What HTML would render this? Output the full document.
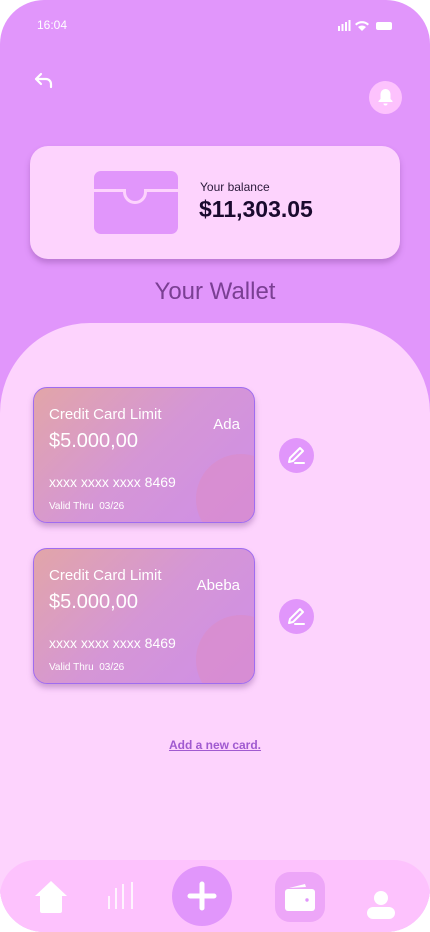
<!DOCTYPE html><html><head><style>
*{margin:0;padding:0;box-sizing:border-box}
body{width:430px;height:932px;background:#fff;font-family:"Liberation Sans",sans-serif;overflow:hidden;position:relative}
.ph{position:absolute;inset:0;background:#e196fb;border-radius:44px;overflow:hidden}
.st{position:absolute;top:18px;left:37px;color:#fff;font-size:12px}
.bal{position:absolute;left:30px;top:146px;width:370px;height:113px;background:#fdd3fd;border-radius:18px;box-shadow:0 4px 6px rgba(120,60,140,.35)}
.wal{position:absolute;left:64px;top:25px;width:84px;height:63px;background:#e196fb;border-radius:7px}
.ttl{position:absolute;top:278px;width:100%;text-align:center;font-size:24px;color:#7a3f93}
.low{position:absolute;left:0;top:323px;width:430px;height:620px;background:#fdd3fd;border-radius:90px 90px 0 0}
.card{position:absolute;left:33px;width:222px;height:136px;border-radius:14px;background:linear-gradient(135deg,#e2a5a8,#d596d6 50%,#cf8ee8);border:1px solid #a06cf0;box-shadow:0 4px 6px rgba(120,60,140,.35);color:#fff;overflow:hidden}
.card .c{position:absolute;left:162px;top:66px;width:90px;height:90px;border-radius:50%;background:rgba(220,140,200,.6)}
.card div{position:absolute}
.ed{position:absolute;left:279px;width:35px;height:35px;border-radius:50%;background:#e196fb}
.nav{position:absolute;left:0;top:860px;width:430px;height:74px;background:#fdc2fd;border-radius:36px}
</style></head><body><div class="ph">
<div class="st">16:04</div>
<svg style="position:absolute;left:337px;top:20px" width="58" height="12"><g fill="#fff"><rect x="1" y="6" width="2" height="5"/><rect x="4.5" y="4" width="2" height="7"/><rect x="8" y="2" width="2" height="9"/><rect x="11.5" y="0" width="2" height="11"/><path d="M18 4a10 10 0 0 1 14 0l-1.5 1.5a8 8 0 0 0-11 0z M21 7a6 6 0 0 1 8 0l-4 4z"/><rect x="39" y="2" width="16" height="8" rx="2"/></g></svg>
<svg style="position:absolute;left:34px;top:72px" width="20" height="18"><path d="M7 2L2 7l5 5M2 7h10a5 5 0 0 1 5 5v3" fill="none" stroke="#fff" stroke-width="2.2" stroke-linecap="round" stroke-linejoin="round"/></svg>
<div style="position:absolute;left:369px;top:81px;width:33px;height:33px;border-radius:50%;background:#fdc2fd"></div>
<svg style="position:absolute;left:377px;top:88px" width="17" height="18"><path d="M8.5 1a5 5 0 0 0-5 5v5l-2 2v1h14v-1l-2-2V6a5 5 0 0 0-5-5z M6.5 15.5a2 2 0 0 0 4 0z" fill="#fff"/></svg>
<div class="bal"><div class="wal"><div style="position:absolute;left:0;top:18px;width:84px;height:3px;background:#fdd3fd"></div><div style="position:absolute;left:29px;top:18px;width:24px;height:15px;border:3px solid #fdd3fd;border-top:none;border-radius:0 0 12px 12px;background:#e196fb"></div></div>
<div style="position:absolute;left:170px;top:34px;font-size:12px;color:#2a1a3a">Your balance</div>
<div style="position:absolute;left:169px;top:50px;font-size:23px;font-weight:bold;color:#1a0a2e">$11,303.05</div></div>
<div class="ttl">Your Wallet</div>
<div class="low"></div>
<div class="card" style="top:387px"><div class="c"></div><div style="left:15px;top:18px;font-size:15px">Credit Card Limit</div><div style="right:14px;top:28px;font-size:15px">Ada</div><div style="left:15px;top:42px;font-size:20px">$5.000,00</div><div style="left:15px;top:86px;font-size:14px">xxxx xxxx xxxx 8469</div><div style="left:15px;top:113px;font-size:10px">Valid Thru&nbsp; 03/26</div></div>
<div class="card" style="top:548px"><div class="c"></div><div style="left:15px;top:18px;font-size:15px">Credit Card Limit</div><div style="right:14px;top:28px;font-size:15px">Abeba</div><div style="left:15px;top:42px;font-size:20px">$5.000,00</div><div style="left:15px;top:86px;font-size:14px">xxxx xxxx xxxx 8469</div><div style="left:15px;top:113px;font-size:10px">Valid Thru&nbsp; 03/26</div></div>
<div class="ed" style="top:438px"><svg width="35" height="35"><path d="M10 24l1-4 10-10 3 3-10 10z M16 25h9" fill="none" stroke="#fff" stroke-width="2" stroke-linecap="round" stroke-linejoin="round"/></svg></div>
<div class="ed" style="top:599px"><svg width="35" height="35"><path d="M10 24l1-4 10-10 3 3-10 10z M16 25h9" fill="none" stroke="#fff" stroke-width="2" stroke-linecap="round" stroke-linejoin="round"/></svg></div>
<div style="position:absolute;left:0;width:430px;top:738px;text-align:center;font-size:12px;font-weight:bold;color:#a05ad0;text-decoration:underline">Add a new card.</div>
<div class="nav">
<svg style="position:absolute;left:34px;top:20px" width="34" height="34"><path d="M17 1L1 16h5v15a2 2 0 0 0 2 2h18a2 2 0 0 0 2-2V16h5z" fill="#fff"/></svg>
<svg style="position:absolute;left:100px;top:0" width="40" height="60"><g stroke="#fff" stroke-width="1.6"><path d="M9 36v13M16 28v21M23 24v25M32 22v27"/></g></svg>
<div style="position:absolute;left:172px;top:6px;width:60px;height:60px;border-radius:50%;background:#e196fb"><svg width="60" height="60"><path d="M30 18v24M18 30h24" stroke="#fff" stroke-width="5" stroke-linecap="round"/></svg></div>
<div style="position:absolute;left:275px;top:12px;width:50px;height:50px;border-radius:15px;background:#eda6f8"><svg width="50" height="50"><path d="M14 16l16-4 1 3z" fill="#fff"/><rect x="10" y="17" width="30" height="22" rx="3" fill="#fff"/><circle cx="32" cy="28" r="1.7" fill="#e196fb"/></svg></div>
<svg style="position:absolute;left:366px;top:30px" width="30" height="32"><circle cx="15" cy="8" r="7" fill="#fff"/><rect x="1" y="17" width="28" height="12" rx="6" fill="#fff"/></svg>
</div>
</div></body></html>
